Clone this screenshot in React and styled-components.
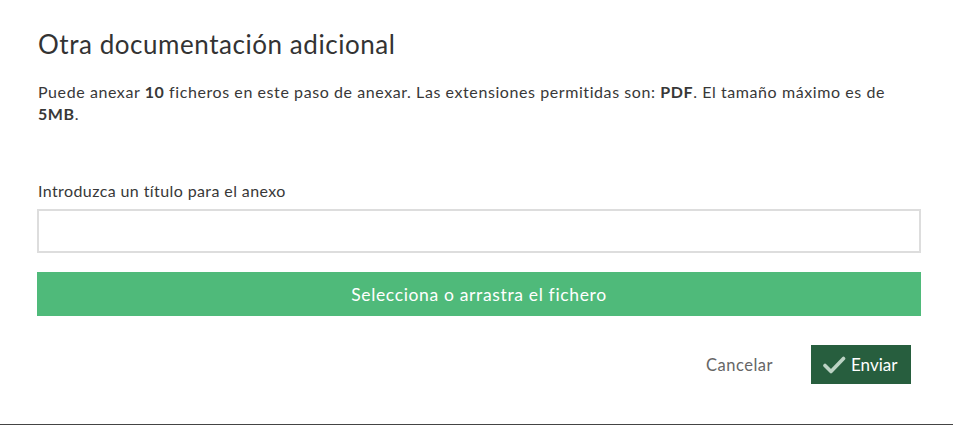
import React from 'react';
import styled, { createGlobalStyle } from 'styled-components';

const GlobalStyle = createGlobalStyle`
  html, body {
    margin: 0;
    padding: 0;
    background: #fff;
  }
  body {
    font-family: 'Lato', 'Noto Sans', sans-serif;
    color: #333;
  }
`

const Modal = styled.div`
  box-sizing: border-box;
  height: 425px;
  padding: 28px 32px 0 37px;
  border-bottom: 1px solid #444;
  background: #fff;
`

const Title = styled.h2`
  margin: 0 0 0 1px;
  font-size: 26px;
  line-height: 32px;
  font-weight: 400;
  letter-spacing: 0.55px;
  color: #333;
`

const Intro = styled.p`
  margin: 21px 0 0 1px;
  font-size: 16px;
  line-height: 22px;
  letter-spacing: 0.58px;
  color: #383838;

  b {
    font-weight: 700;
  }
`

const Label = styled.label`
  display: block;
  margin: 56px 0 8px 1px;
  font-size: 16px;
  line-height: 20px;
  letter-spacing: 0.4px;
  color: #383838;
`

const TitleInput = styled.input`
  display: block;
  box-sizing: border-box;
  width: 100%;
  height: 44px;
  margin: 0;
  border: 2px solid #ddd;
  border-radius: 0;
  outline: none;
  padding: 0 12px;
  font: inherit;
`

const DropButton = styled.button`
  display: block;
  box-sizing: border-box;
  width: 100%;
  height: 44px;
  margin-top: 19px;
  border: 0;
  background: #4fba7a;
  color: #fff;
  font-family: inherit;
  font-size: 17.5px;
  letter-spacing: 0.65px;
  cursor: pointer;
`

const Footer = styled.div`
  display: flex;
  justify-content: flex-end;
  align-items: center;
  gap: 14px;
  margin-top: 29px;
  padding-right: 10px;
`

const TextButton = styled.button`
  border: 0;
  background: none;
  padding: 0 24px;
  height: 39px;
  font-family: inherit;
  font-size: 16.5px;
  letter-spacing: 0.5px;
  color: #666;
  cursor: pointer;
`

const PrimaryButton = styled.button`
  display: flex;
  align-items: center;
  gap: 5px;
  box-sizing: border-box;
  width: 100px;
  height: 39px;
  padding: 0 0 0 11px;
  border: 0;
  background: #275e3e;
  color: #fff;
  font-family: inherit;
  font-size: 17px;
  cursor: pointer;
`

const CheckIcon = styled.svg`
  width: 24px;
  height: 20px;
  flex: none;
  margin-top: 1px;
`

export default function App() {
  return (
    <>
      <GlobalStyle />
      <Modal>
        <Title>Otra documentación adicional</Title>
        <Intro>
          Puede anexar <b>10</b> ficheros en este paso de anexar. Las extensiones permitidas son: <b>PDF</b>. El tamaño máximo es de <b>5MB</b>.
        </Intro>
        <Label htmlFor="anexo-titulo">Introduzca un título para el anexo</Label>
        <TitleInput id="anexo-titulo" type="text" />
        <DropButton type="button">Selecciona o arrastra el fichero</DropButton>
        <Footer>
          <TextButton type="button">Cancelar</TextButton>
          <PrimaryButton type="button">
            <CheckIcon viewBox="0 0 24 20" aria-hidden="true">
              <path
                d="M3 10.5 L9 16.5 L21.5 3.5"
                fill="none"
                stroke="#bcd3c4"
                strokeWidth="3.6"
                strokeLinecap="round"
                strokeLinejoin="round"
              />
            </CheckIcon>
            Enviar
          </PrimaryButton>
        </Footer>
      </Modal>
    </>
  );
}
